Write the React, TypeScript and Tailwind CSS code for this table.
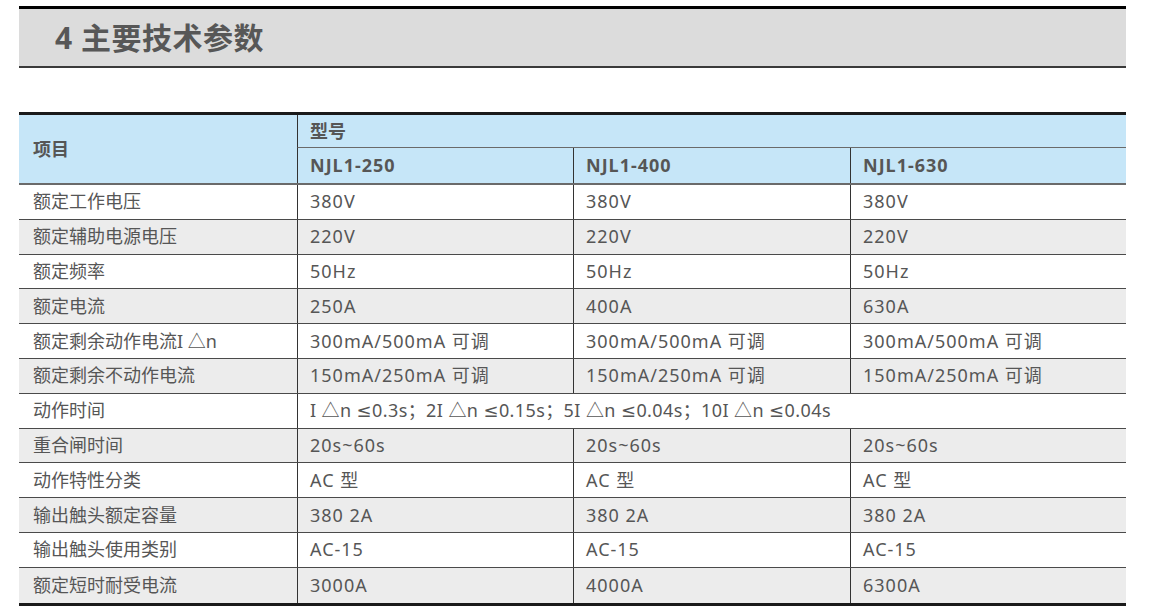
import React from "react";

const font = { fontFamily: '"Noto Sans", "Noto Sans CJK SC", sans-serif' };

type Row = { label: string; vals: string[] | string };

const rows: Row[] = [
  { label: "额定工作电压", vals: ["380V", "380V", "380V"] },
  { label: "额定辅助电源电压", vals: ["220V", "220V", "220V"] },
  { label: "额定频率", vals: ["50Hz", "50Hz", "50Hz"] },
  { label: "额定电流", vals: ["250A", "400A", "630A"] },
  { label: "额定剩余动作电流I △n", vals: ["300mA/500mA 可调", "300mA/500mA 可调", "300mA/500mA 可调"] },
  { label: "额定剩余不动作电流", vals: ["150mA/250mA 可调", "150mA/250mA 可调", "150mA/250mA 可调"] },
  { label: "动作时间", vals: "I △n ≤0.3s；2I △n ≤0.15s；5I △n ≤0.04s；10I △n ≤0.04s" },
  { label: "重合闸时间", vals: ["20s~60s", "20s~60s", "20s~60s"] },
  { label: "动作特性分类", vals: ["AC 型", "AC 型", "AC 型"] },
  { label: "输出触头额定容量", vals: ["380 2A", "380 2A", "380 2A"] },
  { label: "输出触头使用类别", vals: ["AC-15", "AC-15", "AC-15"] },
  { label: "额定短时耐受电流", vals: ["3000A", "4000A", "6300A"] },
];

function T({ s }: { s: string }) {
  const parts = s.split("≤");
  return (
    <>
      {parts.map((p, i) => (
        <React.Fragment key={i}>
          {i > 0 && <span style={{ fontFamily: '"DejaVu Sans", sans-serif' }}>≤</span>}
          {p}
        </React.Fragment>
      ))}
    </>
  );
}

export default function App() {
  return (
    <div className="bg-white w-[1154px] h-[615px] pl-[19px] pt-[6px] text-[#565656]" style={font}>
      <div className="w-[1107px] h-[62px] border-t-[3px] border-b-2 border-t-black border-b-[#3a3a3a] bg-[#dcdcdc] flex items-center pl-[36px]">
        <span className="text-[30px] font-bold tracking-[0.5px] text-[#575757]">4 主要技术参数</span>
      </div>

      <div className="mt-[44px] w-[1107px] border-t-[3px] border-t-[#1a1a1a] border-b-[3px] border-b-[#1a1a1a]">
        <div className="grid grid-cols-[278px_276px_277px_276px] grid-rows-[33px_35px] bg-[#c6e6f8] border-b-2 border-b-[#6a6a6a] font-bold text-[18px]">
          <div className="row-span-2 flex items-center pl-[14px]">项目</div>
          <div className="col-span-3 border-l border-l-[#333] border-b-[1.5px] border-b-[#6a6a6a] flex items-center pl-[12px]">型号</div>
          <div className="border-l border-l-[#333] flex items-center pl-[12px] tracking-[1px]">NJL1-250</div>
          <div className="border-l border-l-[#333] flex items-center pl-[12px] tracking-[1px]">NJL1-400</div>
          <div className="border-l border-l-[#333] flex items-center pl-[12px] tracking-[1px]">NJL1-630</div>
        </div>
        {rows.map((r, i) => (
          <div
            key={i}
            className={`grid grid-cols-[278px_276px_277px_276px] h-[34.8px] text-[18px] ${
              i % 2 === 1 ? "bg-[#ececec]" : "bg-white"
            } ${i < rows.length - 1 ? "border-b border-b-[#4a4a4a]" : ""}`}
          >
            <div className="flex items-center pl-[14px] whitespace-nowrap">{r.label}</div>
            {typeof r.vals === "string" ? (
              <div className="col-span-3 border-l border-l-[#333] flex items-center pl-[12px] whitespace-nowrap tracking-[0.4px]">
                <span><T s={r.vals} /></span>
              </div>
            ) : (
              r.vals.map((v, j) => (
                <div key={j} className="border-l border-l-[#333] flex items-center pl-[12px] whitespace-nowrap tracking-[1px]">
                  {v}
                </div>
              ))
            )}
          </div>
        ))}
      </div>
    </div>
  );
}
